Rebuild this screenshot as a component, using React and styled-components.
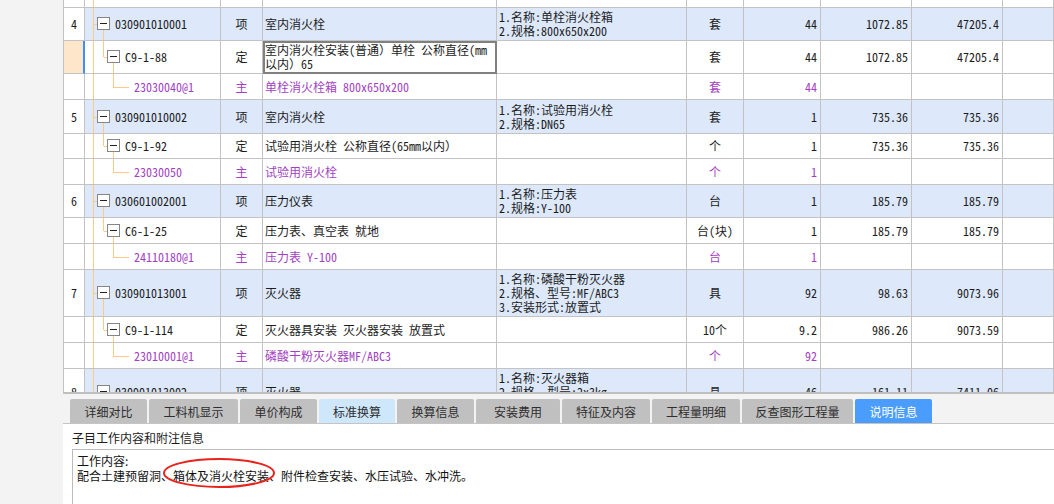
import React from 'react';
import styled, { createGlobalStyle } from 'styled-components';

const GlobalStyle = createGlobalStyle`
  html, body {
    margin: 0;
    padding: 0;
    background: #f3f3f3;
  }
  body {
    font-family: "Noto Sans CJK SC", "Noto Sans", sans-serif;
    color: #1c1c1c;
  }
`;

const TABLE_FONT = `"Noto Sans Mono CJK SC", "Noto Sans CJK SC", monospace`;
const LINE = '#c3c3c3';
const TREE = '#ffc983';
const PURPLE = '#a23fc2';
const BLUE_ROW = '#dde9fb';

const Page = styled.div`
  width: 1054px;
  height: 504px;
  overflow: hidden;
  display: flex;
  flex-direction: column;
  padding-left: 63px;
  box-sizing: border-box;
`;

const Table = styled.div`
  height: 394px;
  flex: none;
  overflow: hidden;
  box-sizing: border-box;
  background: #fff;
  border-left: 1px solid ${LINE};
  border-bottom: 2px solid #bfbfbf;
  font-family: ${TABLE_FONT};
  font-size: 12px;
`;

const Row = styled.div`
  display: grid;
  grid-template-columns: 21px 136px 42px 234px 190px 57px 77px 91px 91px 1fr;
  height: ${p => p.$h}px;
  flex: none;
`;

const Cell = styled.div`
  position: relative;
  box-sizing: border-box;
  border-right: 1px solid ${LINE};
  border-bottom: 1px solid ${LINE};
  display: flex;
  align-items: center;
  justify-content: ${p => (p.$align === 'right' ? 'flex-end' : p.$align === 'center' ? 'center' : 'flex-start')};
  padding: ${p => (p.$align === 'right' ? '0 3px 0 0' : p.$align === 'center' ? '0' : '0 0 0 2px')};
  background: ${p => p.$bg || '#fff'};
  color: ${p => (p.$purple ? PURPLE : '#1c1c1c')};
  line-height: 14px;
  white-space: nowrap;
  overflow: hidden;
`;

const NoCell = styled(Cell)`
  background: ${p => (p.$selected ? '#fde6c9' : '#fff')};
  ${p => p.$selected && `border-right: 2px solid #3d8ff2;`}
`;

const NameCell = styled(Cell)`
  ${p => p.$editing && `outline: 2px solid #808080; outline-offset: -2px; white-space: normal;`}
`;

const Lines = styled.div`
  display: flex;
  flex-direction: column;
  & > span {
    min-height: 14px;
  }
`;

const TreeCell = styled(Cell)`
  padding-left: ${p => p.$indent}px;
`;

const VLine = styled.span`
  position: absolute;
  left: ${p => p.$x}px;
  top: ${p => p.$from};
  bottom: ${p => p.$to};
  width: 1px;
  background: ${TREE};
`;

const HLine = styled.span`
  position: absolute;
  left: ${p => p.$x}px;
  width: ${p => p.$w}px;
  top: 50%;
  height: 1px;
  background: ${TREE};
`;

const Toggle = styled.span`
  position: absolute;
  left: ${p => p.$x}px;
  top: 50%;
  margin-top: -7px;
  width: 13px;
  height: 13px;
  box-sizing: border-box;
  border: 1px solid #858585;
  background: #fff;
  &::after {
    content: '';
    position: absolute;
    left: 2px;
    width: 7px;
    top: 5px;
    height: 1px;
    background: #222;
  }
`;

function Tree({ level }) {
  return (
    <>
      <VLine $x={8} $from="0" $to="-1px" />
      {level === 1 && (
        <>
          <HLine $x={9} $w={3} />
          <VLine $x={18} $from="50%" $to="-1px" />
          <Toggle $x={12} />
        </>
      )}
      {level === 2 && (
        <>
          <VLine $x={18} $from="-1px" $to="50%" />
          <HLine $x={19} $w={3} />
          <VLine $x={28} $from="50%" $to="-1px" />
          <Toggle $x={22} />
        </>
      )}
      {level === 3 && (
        <>
          <VLine $x={28} $from="-1px" $to="50%" />
          <HLine $x={28} $w={16} />
        </>
      )}
    </>
  );
}

const rows = [
  { level: 0, h: 8 },
  { level: 1, h: 33, no: '4', code: '030901010001', type: '项', name: '室内消火栓', feat: ['1.名称:单栓消火栓箱', '2.规格:800x650x200'], unit: '套', qty: '44', price: '1072.85', total: '47205.4' },
  { level: 2, h: 33, code: 'C9-1-88', type: '定', name: ['室内消火栓安装(普通）单栓 公称直径(mm', '以内）65'], unit: '套', qty: '44', price: '1072.85', total: '47205.4', selected: true },
  { level: 3, h: 26, code: '23030040@1', type: '主', name: '单栓消火栓箱 800x650x200', unit: '套', qty: '44' },
  { level: 1, h: 34, no: '5', code: '030901010002', type: '项', name: '室内消火栓', feat: ['1.名称:试验用消火栓', '2.规格:DN65'], unit: '套', qty: '1', price: '735.36', total: '735.36' },
  { level: 2, h: 25, code: 'C9-1-92', type: '定', name: '试验用消火栓 公称直径(65mm以内）', unit: '个', qty: '1', price: '735.36', total: '735.36' },
  { level: 3, h: 26, code: '23030050', type: '主', name: '试验用消火栓', unit: '个', qty: '1' },
  { level: 1, h: 33, no: '6', code: '030601002001', type: '项', name: '压力仪表', feat: ['1.名称:压力表', '2.规格:Y-100'], unit: '台', qty: '1', price: '185.79', total: '185.79' },
  { level: 2, h: 26, code: 'C6-1-25', type: '定', name: '压力表、真空表 就地', unit: '台(块)', qty: '1', price: '185.79', total: '185.79' },
  { level: 3, h: 26, code: '24110180@1', type: '主', name: '压力表 Y-100', unit: '台', qty: '1' },
  { level: 1, h: 47, no: '7', code: '030901013001', type: '项', name: '灭火器', feat: ['1.名称:磷酸干粉灭火器', '2.规格、型号:MF/ABC3', '3.安装形式:放置式'], unit: '具', qty: '92', price: '98.63', total: '9073.96' },
  { level: 2, h: 26, code: 'C9-1-114', type: '定', name: '灭火器具安装 灭火器安装 放置式', unit: '10个', qty: '9.2', price: '986.26', total: '9073.59' },
  { level: 3, h: 26, code: '23010001@1', type: '主', name: '磷酸干粉灭火器MF/ABC3', unit: '个', qty: '92' },
  { level: 1, h: 47, no: '8', code: '030901013002', type: '项', name: '灭火器', feat: ['1.名称:灭火器箱', '2.规格、型号:2x3kg', ''], unit: '具', qty: '46', price: '161.11', total: '7411.06' },
];

const indents = { 0: 0, 1: 30, 2: 40, 3: 49 };

function TableRow({ r }) {
  const bg = r.level === 1 ? BLUE_ROW : '#fff';
  const purple = r.level === 3;
  return (
    <Row $h={r.h}>
      <NoCell $align="center" $selected={r.selected}>{r.no}</NoCell>
      <TreeCell $bg={bg} $purple={purple} $indent={indents[r.level]}>
        <Tree level={r.level} />
        {r.code}
      </TreeCell>
      <Cell $bg={bg} $purple={purple} $align="center">{r.type}</Cell>
      <NameCell $bg={bg} $purple={purple} $editing={r.selected}>
        {Array.isArray(r.name) ? (
          <Lines>{r.name.map(l => <span key={l}>{l}</span>)}</Lines>
        ) : r.name}
      </NameCell>
      <Cell $bg={bg}>
        {r.feat && <Lines>{r.feat.map((l, i) => <span key={i}>{l}</span>)}</Lines>}
      </Cell>
      <Cell $bg={bg} $purple={purple} $align="center">{r.unit}</Cell>
      <Cell $bg={bg} $purple={purple} $align="right">{r.qty}</Cell>
      <Cell $bg={bg} $align="right">{r.price}</Cell>
      <Cell $bg={bg} $align="right">{r.total}</Cell>
      <Cell $bg={bg} />
    </Row>
  );
}

const TabStrip = styled.div`
  display: flex;
  gap: 2px;
  padding: 5px 0 0 7px;
  height: 30px;
  box-sizing: border-box;
  border-bottom: 1px solid #c4c4c4;
  flex: none;
`;

const Tab = styled.div`
  width: ${p => p.$w}px;
  height: 24px;
  display: flex;
  align-items: center;
  justify-content: center;
  font-size: 12px;
  color: ${p => (p.$state === 'on' ? '#fff' : '#2e2e2e')};
  background: ${p => (p.$state === 'on' ? '#4a9dfd' : p.$state === 'soft' ? '#cfe7fb' : '#c0c0c0')};
  border-radius: 2px 2px 0 0;
`;

const tabs = [
  { t: '详细对比', w: 77 },
  { t: '工料机显示', w: 89 },
  { t: '单价构成', w: 77 },
  { t: '标准换算', w: 76, s: 'soft' },
  { t: '换算信息', w: 77 },
  { t: '安装费用', w: 84 },
  { t: '特征及内容', w: 88 },
  { t: '工程量明细', w: 88 },
  { t: '反查图形工程量', w: 111 },
  { t: '说明信息', w: 77, s: 'on' },
];

const Panel = styled.div`
  flex: 1;
  background: #fff;
  padding: 6px 0 0 9px;
  overflow: hidden;
  font-size: 12px;
`;

const PanelTitle = styled.div`
  line-height: 16px;
  color: #1c1c1c;
`;

const NoteBox = styled.div`
  position: relative;
  margin-top: 3px;
  height: 80px;
  width: calc(100% + 20px);
  border: 1px solid #bcbcbc;
  padding: 3px 0 0 4px;
  line-height: 15px;
  color: #111;
`;

const Mark = styled.svg`
  position: absolute;
  left: 89px;
  top: 7px;
  overflow: visible;
`;

export default function App() {
  return (
    <>
      <GlobalStyle />
      <Page>
        <Table>
          {rows.map((r, i) => <TableRow key={i} r={r} />)}
        </Table>
        <TabStrip>
          {tabs.map(tab => (
            <Tab key={tab.t} $w={tab.w} $state={tab.s}>{tab.t}</Tab>
          ))}
        </TabStrip>
        <Panel>
          <PanelTitle>子目工作内容和附注信息</PanelTitle>
          <NoteBox>
            <div>工作内容:</div>
            <div>配合土建预留洞、箱体及消火栓安装、附件检查安装、水压试验、水冲洗。</div>
            <Mark width="114" height="32" viewBox="0 0 114 32">
              <ellipse cx="57" cy="16" rx="55" ry="14" fill="none" stroke="#e8231c" strokeWidth="2" />
            </Mark>
          </NoteBox>
        </Panel>
      </Page>
    </>
  );
}
